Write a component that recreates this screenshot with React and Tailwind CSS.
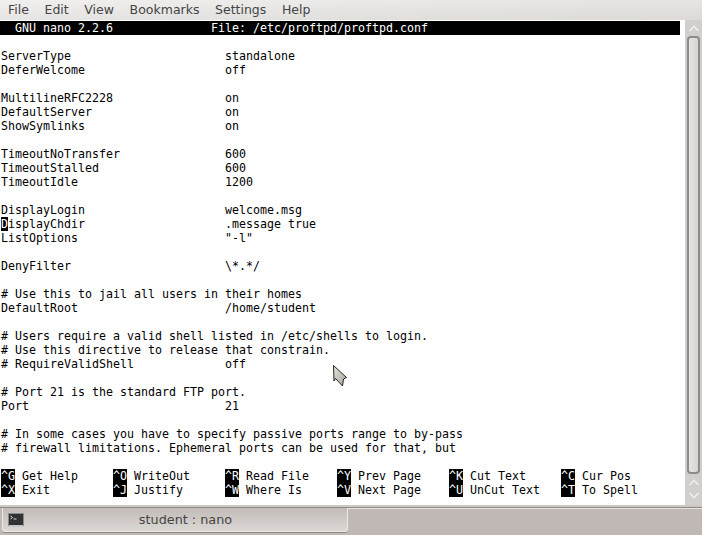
const rows = [
  [],
  ["ServerType", "standalone"],
  ["DeferWelcome", "off"],
  [],
  ["MultilineRFC2228", "on"],
  ["DefaultServer", "on"],
  ["ShowSymlinks", "on"],
  [],
  ["TimeoutNoTransfer", "600"],
  ["TimeoutStalled", "600"],
  ["TimeoutIdle", "1200"],
  [],
  ["DisplayLogin", "welcome.msg"],
  ["DisplayChdir", ".message true"],
  ["ListOptions", '"-l"'],
  [],
  ["DenyFilter", "\\*.*/"],
  [],
  ["# Use this to jail all users in their homes"],
  ["DefaultRoot", "/home/student"],
  [],
  ["# Users require a valid shell listed in /etc/shells to login."],
  ["# Use this directive to release that constrain."],
  ["# RequireValidShell", "off"],
  [],
  ["# Port 21 is the standard FTP port."],
  ["Port", "21"],
  [],
  ["# In some cases you have to specify passive ports range to by-pass"],
  ["# firewall limitations. Ephemeral ports can be used for that, but"],
  [],
];

const shortcuts = [
  [["^G", "Get Help"], ["^O", "WriteOut"], ["^R", "Read File"], ["^Y", "Prev Page"], ["^K", "Cut Text"], ["^C", "Cur Pos"]],
  [["^X", "Exit"], ["^J", "Justify"], ["^W", "Where Is"], ["^V", "Next Page"], ["^U", "UnCut Text"], ["^T", "To Spell"]],
];

const menus = ["File", "Edit", "View", "Bookmarks", "Settings", "Help"];

function Row({ left, right }) {
  const cursor = left === "DisplayChdir";
  return (
    <div className="flex h-[14px] pl-px">
      <div className="w-[224px] shrink-0 whitespace-pre">
        {cursor ? (
          <>
            <span className="bg-black text-white">D</span>
            {left.slice(1)}
          </>
        ) : (
          left
        )}
      </div>
      {right && <div className="whitespace-pre">{right}</div>}
    </div>
  );
}

function Chevron({ up }) {
  return (
    <svg width="12" height="7" viewBox="0 0 12 7" fill="none" stroke="#f0eeec" strokeWidth="1.6">
      <path d={up ? "M1.5 6L6 1.5L10.5 6" : "M1.5 1L6 5.5L10.5 1"} />
    </svg>
  );
}

export default function App() {
  return (
    <div className="relative flex h-[535px] w-[702px] flex-col overflow-hidden bg-[#c0b8b4] font-['DejaVu_Sans',sans-serif]">
      {/* menu bar */}
      <div className="flex h-[20px] shrink-0 gap-[15.6px] bg-gradient-to-br from-[#f1f0ef] to-[#dcd9d6] pl-[8px] pt-[2px] text-[12.5px] leading-[16px] text-[#444]">
        {menus.map((m) => (
          <div key={m}>{m}</div>
        ))}
      </div>

      <div className="flex h-[485px] shrink-0">
        {/* terminal */}
        <div className="w-[685px] shrink-0 bg-white pt-px font-['DejaVu_Sans_Mono',monospace] text-[11.63px] leading-[14px] text-black">
          <div className="flex h-[14px] w-[680px] bg-black pl-px whitespace-pre text-white">
            <div className="w-[210px] shrink-0">{"  GNU nano 2.2.6"}</div>
            <div>File: /etc/proftpd/proftpd.conf</div>
          </div>
          {rows.map((r, i) => (
            <Row key={i} left={r[0]} right={r[1]} />
          ))}
          {shortcuts.map((line, i) => (
            <div key={i} className="flex h-[14px] pl-px">
              {line.map(([k, label]) => (
                <div key={k} className="flex w-[112px] shrink-0 whitespace-pre">
                  <span className="w-[14px] bg-black text-white">{k}</span>
                  <span className="ml-[7px]">{label}</span>
                </div>
              ))}
            </div>
          ))}
        </div>

        {/* scrollbar */}
        <div className="flex w-[17px] shrink-0 flex-col items-center bg-[#d2cecb] pt-[5px]">
          <Chevron up />
          <div className="mt-[4px] h-[438px] w-[13px] rounded-[4px] border-2 border-[#8f8a86] bg-gradient-to-r from-[#e6e3e1] to-[#d8d4d1]" />
          <div className="mt-[5px]">
            <Chevron up />
          </div>
          <div className="mt-[6px]">
            <Chevron />
          </div>
        </div>
      </div>

      {/* taskbar */}
      <div className="flex h-[30px] shrink-0 flex-col">
        <div className="h-[2px] bg-[#cdc8c4]" />
        <div className="h-px bg-[#8f8a86]" />
        <div className="flex flex-1">
          <div className="ml-[2px] flex h-[24px] w-[346px] items-center rounded-b-[3px] border-x border-b border-[#ece9e7] bg-gradient-to-b from-[#c2bbb7] to-[#dbd8d5] pl-[5px] shadow-[0_1px_0_#8f8a86]">
            <svg width="16" height="14" viewBox="0 0 16 14">
              <rect x="0.5" y="0.5" width="15" height="12" fill="#2f3133" stroke="#8a8a8a" />
              <path d="M2.5 3l2 1.5L2.5 6M5.5 6h3" stroke="#fff" strokeWidth="0.8" fill="none" />
              <rect x="1" y="12" width="14" height="2" fill="#c4c4c4" />
            </svg>
            <div className="flex-1 text-center text-[12.8px] text-[#444]">student : nano</div>
          </div>
          <div className="h-px flex-1 bg-[#e6e3e1]" />
        </div>
      </div>

      {/* mouse pointer */}
      <svg className="absolute left-[332px] top-[364px]" width="16" height="24" viewBox="0 0 16 24">
        <defs>
          <linearGradient id="ptr" x1="0" y1="0" x2="1" y2="1">
            <stop offset="0" stopColor="#e4e2da" />
            <stop offset="1" stopColor="#a9a69c" />
          </linearGradient>
        </defs>
        <path d="M1.5 1.5L14.5 13.5L11.5 15L10.5 22L3.5 14.5L2 17Z" fill="url(#ptr)" stroke="#222" strokeWidth="1" strokeLinejoin="round" />
      </svg>
    </div>
  );
}
